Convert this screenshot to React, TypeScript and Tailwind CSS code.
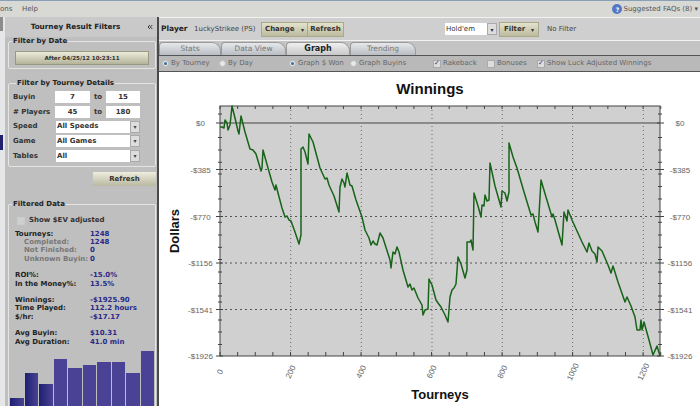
import React from 'react';
import { ChevronsLeft } from 'lucide-react';

const font = 'font-["DejaVu_Sans",Verdana,sans-serif]';

const curve: [number, number][] = [
  [220, 127], [222, 127], [224, 128], [225, 120], [227, 123], [228, 130], [230, 125], [231, 116], [232, 106],
  [235, 118], [238, 131], [239, 134], [241, 116], [245, 132], [250, 149], [253, 150], [256, 154], [261, 171],
  [262, 168], [263, 150], [268, 168], [272, 182], [275, 190], [276, 185], [278, 193], [282, 208], [285, 217],
  [287, 216], [289, 220], [291, 221], [295, 232], [299, 244], [301, 235], [301, 149], [303, 147], [305, 152],
  [308, 164], [309, 134], [313, 142], [320, 168], [325, 179], [327, 178], [329, 185], [334, 196], [339, 212],
  [340, 187], [342, 179], [344, 183], [345, 187], [347, 173], [350, 185], [352, 186], [356, 200], [362, 217],
  [365, 230], [369, 238], [371, 245], [373, 241], [375, 244], [377, 245], [380, 233], [383, 238], [390, 260],
  [391, 268], [393, 252], [395, 254], [397, 247], [399, 252], [403, 270], [408, 287], [410, 284], [412, 290],
  [414, 288], [418, 298], [422, 305], [423, 315], [425, 310], [428, 309], [429, 279], [432, 285], [436, 300],
  [438, 303], [441, 307], [443, 311], [445, 315], [448, 322], [450, 297], [452, 290], [454, 288], [456, 284],
  [458, 257], [461, 264], [465, 278], [467, 270], [467, 242], [470, 242], [471, 240], [473, 250], [474, 193],
  [478, 206], [481, 217], [482, 205], [484, 206], [485, 195], [487, 201], [489, 200], [490, 163], [495, 186],
  [501, 207], [502, 191], [505, 193], [507, 201], [509, 192], [509, 143], [513, 157], [517, 168], [524, 192],
  [531, 215], [533, 214], [535, 222], [538, 232], [541, 180], [546, 197], [552, 217], [553, 214], [555, 220],
  [562, 245], [564, 212], [567, 221], [568, 210], [572, 220], [577, 231], [582, 242], [585, 248], [587, 252],
  [589, 243], [592, 251], [595, 254], [597, 262], [598, 247], [602, 251], [605, 258], [608, 265], [611, 273],
  [613, 266], [618, 282], [625, 302], [627, 297], [631, 306], [635, 317], [637, 330], [640, 330], [641, 320],
  [642, 330], [644, 322], [649, 340], [653, 355], [657, 346], [660, 356],
];

const yLabels = [
  { y: 123, t: '$0' },
  { y: 169.5, t: '-$385' },
  { y: 216.5, t: '-$770' },
  { y: 263, t: '-$1156' },
  { y: 309.5, t: '-$1541' },
  { y: 356, t: '-$1926' },
];

const minorY = [114, 137.5, 150, 162.3, 174, 186.5, 199, 211.7, 222.3, 235, 247.3, 259.5, 272, 283.5, 296, 302, 320, 332, 344.5];
const bars = [8, 33, 22, 47, 38, 41, 44, 44, 33, 55];

function Chart() {
  const left = 159;
  const top = 72;
  const xs = Array.from({ length: 26 }, (_, i) => 220 + i * 17.63);
  return (
    <svg width="541" height="334" viewBox={`${left} ${top} 541 334`} className="block">
      <rect x="220" y="106" width="440" height="250" fill="#d0d0d0" />
      {yLabels.slice(1, 5).map((l) => (
        <line key={l.t} x1="220" x2="660" y1={l.y} y2={l.y} stroke="#555" strokeWidth="1" strokeDasharray="2 3" />
      ))}
      {[290.7, 361.3, 432, 502.3, 572.6, 643.3].map((x) => (
        <line key={x} x1={x} x2={x} y1="106" y2="356" stroke="#666" strokeWidth="1" strokeDasharray="1 3" />
      ))}
      <line x1="220" x2="660" y1="123" y2="123" stroke="#8a8a8a" strokeWidth="2" />
      <rect x="220" y="106" width="440" height="250" fill="none" stroke="#444" strokeWidth="1" />
      {xs.map((x) => (
        <g key={x}>
          <line x1={x} x2={x} y1="106" y2="109" stroke="#444" />
          <line x1={x} x2={x} y1="352" y2="356" stroke="#444" />
        </g>
      ))}
      {minorY.map((y) => (
        <g key={y}>
          <line x1="218" x2="222" y1={y} y2={y} stroke="#444" />
          <line x1="658" x2="662" y1={y} y2={y} stroke="#444" />
        </g>
      ))}
      {yLabels.map((l) => (
        <g key={l.t}>
          <line x1="216" x2="223" y1={l.y} y2={l.y} stroke="#444" />
          <line x1="657" x2="664" y1={l.y} y2={l.y} stroke="#444" />
          <text x="200.5" y={l.y + 3} textAnchor="middle" fontSize="8" fill="#666" fontFamily="Liberation Sans">{l.t}</text>
          <text x="680" y={l.y + 3} textAnchor="middle" fontSize="8" fill="#666" fontFamily="Liberation Sans">{l.t}</text>
        </g>
      ))}
      {[0, 200, 400, 600, 800, 1000, 1200].map((v, i) => (
        <text
          key={v}
          x={0}
          y={0}
          transform={`translate(${220 + i * 70.55 + 2.5},373) rotate(-65)`}
          textAnchor="middle"
          fontSize="8"
          fill="#666"
          fontFamily="Liberation Sans"
        >
          {v}
        </text>
      ))}
      <polyline points={curve.map((p) => p.join(',')).join(' ')} fill="none" stroke="#176318" strokeWidth="1.5" strokeLinejoin="round" />
      <text x="430" y="94" textAnchor="middle" fontSize="15" fontWeight="700" fill="#111" fontFamily="Liberation Sans">Winnings</text>
      <text x="440" y="399" textAnchor="middle" fontSize="13" fontWeight="700" fill="#111" fontFamily="Liberation Sans">Tourneys</text>
      <text transform="translate(179,231) rotate(-90)" textAnchor="middle" fontSize="13" fontWeight="700" fill="#111" fontFamily="Liberation Sans">Dollars</text>
    </svg>
  );
}

function Box({ title, className, children }: { title: string; className?: string; children: React.ReactNode }) {
  return (
    <fieldset className={`ml-[3px] mr-[1px] rounded-[2px] border border-[#e4e4e0] ${className ?? ''}`}>
      <legend className="ml-[3px] px-[1px] text-[7px] font-bold leading-[9px] text-[#222]">{title}</legend>
      {children}
    </fieldset>
  );
}

function Select({ value }: { value: string }) {
  return (
    <div className="ml-[1px] flex h-[12px] w-[84px] items-center justify-between bg-white pl-[1px] text-[7px] font-bold text-[#333]">
      {value}
      <span className="flex h-[12px] w-[10px] items-center justify-center border border-[#aaa] bg-[#ddd] text-[6px] leading-none text-[#444]">▾</span>
    </div>
  );
}

function Stat({ label, value, sub }: { label: string; value: string; sub?: boolean }) {
  return (
    <div className="flex h-[8.4px] items-center text-[7px] font-bold leading-none">
      <span className={`w-[75px] shrink-0 whitespace-nowrap ${sub ? 'pl-[9px] text-[#777]' : 'text-[#222]'}`}>{label}</span>
      <span className="text-[#2a2a88]">{value}</span>
    </div>
  );
}

function Radio({ label, on }: { label: string; on?: boolean }) {
  return (
    <div className="flex items-center gap-[2px] whitespace-nowrap">
      <span className="flex h-[7px] w-[7px] items-center justify-center rounded-full border border-[#bbb] bg-[#e8e8e8]">
        {on && <span className="h-[3px] w-[3px] rounded-full bg-[#2f6f9c]" />}
      </span>
      {label}
    </div>
  );
}

function Check({ label, on }: { label: string; on?: boolean }) {
  return (
    <div className="flex items-center gap-[2px] whitespace-nowrap">
      <span className="flex h-[8px] w-[8px] items-center justify-center border border-[#aaa] bg-[#ddd] text-[7px] leading-none text-[#447]">{on ? '✓' : ''}</span>
      {label}
    </div>
  );
}

function Tab({ label, active, className }: { label: string; active?: boolean; className?: string }) {
  return (
    <div
      className={`flex h-[13px] items-center justify-center rounded-tl-[4px] rounded-tr-[9px] border border-b-0 border-[#9a9a9a] ${
        active ? 'bg-gradient-to-b from-[#f0f0f0] to-[#c8c8c8] text-[8px] font-bold text-[#222]' : 'bg-gradient-to-b from-[#e6e8ea] to-[#b9bec4] text-[7.5px] text-[#777]'
      } ${className ?? ''}`}
    >
      {label}
    </div>
  );
}

function RangeRow({ label, from, to }: { label: string; from: string; to: string }) {
  return (
    <div className="flex h-[12px] items-center">
      <span className="w-[42px] whitespace-nowrap">{label}</span>
      <span className="flex h-[12px] w-[35px] items-center justify-center bg-white">{from}</span>
      <span className="w-[16px] text-center">to</span>
      <span className="flex h-[12px] w-[34px] items-center justify-center bg-white">{to}</span>
    </div>
  );
}

export default function App() {
  return (
    <div className={`${font} flex h-[406px] w-[700px] flex-col overflow-hidden bg-white`}>
      {/* menu bar */}
      <div className="flex h-[17px] shrink-0 items-center justify-between border-t border-[#8aa0b8] bg-[#d8d8d4] pr-[2px] text-[7px] text-[#555]">
        <div className="flex">
          <span className="w-[22px]">ons</span>
          <span>Help</span>
        </div>
        <div className="flex items-center gap-[1px]">
          <span className="flex h-[10px] w-[10px] items-center justify-center rounded-full bg-[#5577c4] text-[6px] font-bold text-white">?</span>
          <span>Suggested FAQs (8) ▾</span>
        </div>
      </div>

      <div className="flex min-h-0 flex-1">
        {/* left edge */}
        <div className="flex w-[5px] shrink-0 flex-col bg-[#e4e6e8]">
          <div className="h-[14px] w-[3px] bg-[#8c8c8c]" />
          <div className="mt-[104px] h-[15px] w-[3px] bg-[#20206e]" />
        </div>

        {/* filters sidebar */}
        <div className="flex w-[154px] shrink-0 flex-col border-r-2 border-[#4a4a4a] bg-[#bfbfbf]">
          <div className="relative flex h-[20px] shrink-0 items-center justify-center bg-[#c9c9c9] pr-[11px] text-[7.25px] font-bold text-[#222]">
            Tourney Result Filters
            <ChevronsLeft className="absolute right-[3px] top-[6px] h-[8px] w-[8px] text-[#333]" strokeWidth={3} />
          </div>

          <Box title="Filter by Date" className="pb-[3px] pt-[5px]">
            <div className="mx-[6px] flex h-[14px] items-center justify-center border border-[#99997f] bg-gradient-to-b from-[#ecebdc] to-[#b5b49a] text-[5.6px] font-bold text-[#333]">
              After 04/25/12 10:23:11
            </div>
          </Box>

          <Box title="Filter by Tourney Details" className="mt-[10px] px-[4px] pb-[4px] pt-[3px]">
            <div className="flex flex-col gap-[2.75px] text-[7px] font-bold text-[#333]">
              <RangeRow label="Buyin" from="7" to="15" />
              <RangeRow label="# Players" from="45" to="180" />
              <div className="flex h-[12px] items-center">
                <span className="w-[42px]">Speed</span>
                <Select value="All Speeds" />
              </div>
              <div className="flex h-[12px] items-center">
                <span className="w-[42px]">Game</span>
                <Select value="All Games" />
              </div>
              <div className="flex h-[12px] items-center">
                <span className="w-[42px]">Tables</span>
                <Select value="All" />
              </div>
            </div>
          </Box>

          <div className="mr-[1px] mt-[5px] flex justify-end">
            <div className="flex h-[14px] w-[63px] items-center justify-center bg-gradient-to-b from-[#eeeddf] to-[#b9b8a0] text-[7px] font-bold text-[#333]">
              Refresh
            </div>
          </div>

          <fieldset className="ml-[3px] mr-[1px] mt-[14px] flex min-h-0 flex-1 flex-col rounded-t-[2px] border border-b-0 border-[#e4e4e0] pl-[6px]">
            <legend className="ml-[-3px] px-[1px] text-[7px] font-bold leading-[9px] text-[#222]">Filtered Data</legend>
            <div className="mt-[7px] flex items-center gap-[4px] pl-[2px] text-[7px] font-bold leading-[9px] text-[#333]">
              <span className="h-[8px] w-[8px] border border-[#ccc] bg-[#cfcfcf]" />
              Show $EV adjusted
            </div>
            <div className="mt-[5px] flex flex-col">
              <Stat label="Tourneys:" value="1248" />
              <Stat label="Completed:" value="1248" sub />
              <Stat label="Not Finished:" value="0" sub />
              <Stat label="Unknown Buyin:" value="0" sub />
              <div className="h-[8px]" />
              <Stat label="ROI%:" value="-15.0%" />
              <Stat label="In the Money%:" value="13.5%" />
              <div className="h-[8px]" />
              <Stat label="Winnings:" value="-$1925.90" />
              <Stat label="Time Played:" value="112.2 hours" />
              <Stat label="$/hr:" value="-$17.17" />
              <div className="h-[8px]" />
              <Stat label="Avg Buyin:" value="$10.31" />
              <Stat label="Avg Duration:" value="41.0 min" />
            </div>
            <div className="-ml-[5px] mr-[1px] mt-auto flex h-[55px] shrink-0 items-end gap-[1px]">
              {bars.map((h, i) => (
                <div
                  key={i}
                  className={`flex-1 ${i < 3 ? 'bg-gradient-to-r from-[#1f1f72] to-[#4a4294]' : 'bg-[#4a4294]'}`}
                  style={{ height: h }}
                />
              ))}
            </div>
          </fieldset>
        </div>

        {/* main area */}
        <div className="flex min-w-0 flex-1 flex-col">
          <div className="flex h-[24px] shrink-0 items-center border-y border-[#f2f2f0] bg-[#cfcfcf] pl-[2px] text-[7px] text-[#444]">
            <span className="w-[33px] text-[7.5px] font-bold text-[#222]">Player</span>
            <span className="w-[67px] whitespace-nowrap">1uckyStrikee (PS)</span>
            <div className="flex h-[15px] w-[47px] items-center justify-between border border-[#aaa98c] bg-gradient-to-b from-[#e3e2cc] to-[#bcbb9f] px-[3px] font-bold text-[#333]">
              Change <span className="text-[6px]">▾</span>
            </div>
            <div className="flex h-[15px] w-[36px] items-center justify-center border border-l-0 border-[#aaa98c] bg-gradient-to-b from-[#e3e2cc] to-[#bcbb9f] font-bold text-[#333]">
              Refresh
            </div>
            <div className="ml-[101px] flex h-[12px] w-[52px] items-center justify-between bg-white pl-[1px] text-[#333]">
              Hold'em
              <span className="flex h-[12px] w-[10px] items-center justify-center border border-[#aaa] bg-[#ddd] text-[6px]">▾</span>
            </div>
            <div className="ml-[2px] flex h-[15px] w-[40px] items-center justify-between border border-[#aaa98c] bg-gradient-to-b from-[#e3e2cc] to-[#bcbb9f] px-[4px] font-bold text-[#333]">
              Filter <span className="text-[6px]">▾</span>
            </div>
            <span className="ml-[8px]">No Filter</span>
          </div>

          <div className="flex h-[14px] shrink-0 items-end bg-[#c4c4c4]">
            <Tab label="Stats" className="w-[62px]" />
            <Tab label="Data View" className="w-[65px]" />
            <Tab label="Graph" active className="w-[64px]" />
            <Tab label="Trending" className="w-[66px]" />
          </div>

          <div className="flex h-[17px] shrink-0 items-center border-y border-[#555] bg-[#b9b9b9] pl-[3px] text-[7px] text-[#666]">
            <div className="w-[57px]"><Radio label="By Tourney" on /></div>
            <div className="w-[70px]"><Radio label="By Day" /></div>
            <div className="w-[61px]"><Radio label="Graph $ Won" on /></div>
            <div className="w-[83px]"><Radio label="Graph Buyins" /></div>
            <div className="w-[54px]"><Check label="Rakeback" on /></div>
            <div className="w-[50px]"><Check label="Bonuses" /></div>
            <Check label="Show Luck Adjusted Winnings" on />
          </div>

          <div className="min-h-0 flex-1 bg-white">
            <Chart />
          </div>
        </div>
      </div>
    </div>
  );
}
